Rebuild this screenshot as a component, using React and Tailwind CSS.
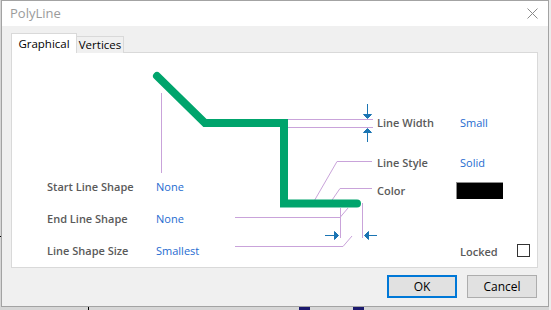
import React from 'react';

const font = { fontFamily: '"Open Sans", "Noto Sans", sans-serif' };

function Diagram() {
  // drawn in page coordinates; panel inner box starts at (12, 53)
  return (
    <svg className="absolute inset-0" width="525" height="214" viewBox="12 53 525 214">
      <g stroke="#c9a3da" strokeWidth="1" fill="none">
        <path d="M161.5 93 V173" />
        <path d="M288 119.5 H373" />
        <path d="M288 127.5 H373" />
        <path d="M313 203 L337 161.5 H372" />
        <path d="M330 203 L340 188.5 H372" />
        <path d="M235 217.5 H340 L348 208" />
        <path d="M235 246.5 H343 L352 236" />
        <path d="M340.5 208 V238" />
        <path d="M362.5 203 V238" />
      </g>
      <polyline
        points="157,76 205,123 284,123 284,203.5 357,203.5"
        fill="none"
        stroke="#00a46c"
        strokeWidth="8"
        strokeLinecap="round"
        strokeLinejoin="miter"
      />
      <g stroke="#1b75b3" fill="#1b75b3" strokeWidth="1">
        <path d="M367.5 104 V115" />
        <path d="M363.5 114.5 H371.5 L367.5 118.5 Z" />
        <path d="M367.5 132 V142" />
        <path d="M363.5 132.5 H371.5 L367.5 128.5 Z" />
        <path d="M325 235.5 H335" />
        <path d="M334.5 231.5 V239.5 L338.5 235.5 Z" />
        <path d="M368 235.5 H377" />
        <path d="M368.5 231.5 V239.5 L364.5 235.5 Z" />
      </g>
    </svg>
  );
}

function Label({ children }) {
  return <span className="text-[11px] font-semibold text-[#5a5a5a] leading-none">{children}</span>;
}

function Value({ children }) {
  return <span className="text-[11px] text-[#1e6bd0] leading-none">{children}</span>;
}

export default function App() {
  return (
    <div className="relative w-[551px] h-[310px] bg-[#d6d6d6] overflow-hidden" style={font}>
      {/* desktop bits peeking out behind the dialog */}
      <div className="absolute left-[88px] top-[307px] w-px h-[3px] bg-black" />
      <div className="absolute left-[299px] top-[307px] w-[11px] h-[3px] bg-[#1c1a6e]" />
      <div className="absolute left-[353px] top-[307px] w-[11px] h-[3px] bg-[#1c1a6e]" />
      <div className="absolute left-0 top-[236px] w-[3px] h-px bg-black" />
      <div className="absolute left-[549px] top-0 w-[2px] h-[310px] bg-[#ececec]" />

      <div className="relative ml-px w-[548px] h-[307px] border border-[#a3a3a3] bg-[#f0f0f0] flex flex-col">
        {/* title bar */}
        <div className="h-[25px] bg-white flex items-center justify-between pl-[8px] pr-[10px]">
          <span className="text-[13px] text-[#9b9b9b]">PolyLine</span>
          <svg width="11" height="11" viewBox="0 0 11 11">
            <path d="M0.5 0.5 L10.5 10.5 M10.5 0.5 L0.5 10.5" stroke="#8a8a8a" strokeWidth="1" />
          </svg>
        </div>

        <div className="flex-1 flex flex-col pl-[9px] pr-[8px]">
          {/* tabs */}
          <div className="flex items-end mt-[7px] relative z-10 -mb-px">
            <div className="w-[66px] h-[20px] bg-white border border-b-0 border-[#d9d9d9] flex items-center justify-center">
              <span className="text-[11.5px] text-black">Graphical</span>
            </div>
            <div className="w-[47px] h-[17px] bg-[#f0f0f0] border border-l-0 border-b-0 border-[#d9d9d9] flex items-center justify-center">
              <span className="text-[11.5px] text-black">Vertices</span>
            </div>
          </div>

          {/* panel */}
          <div className="relative w-[527px] h-[216px] bg-white border border-[#d9d9d9] flex">
            <Diagram />
            <div className="relative w-[365px] pl-[35px] pt-[117px]">
              <div className="grid grid-cols-[109px_auto] auto-rows-[32px] items-center">
                <Label>Start Line Shape</Label>
                <Value>None</Value>
                <Label>End Line Shape</Label>
                <Value>None</Value>
                <Label>Line Shape Size</Label>
                <Value>Smallest</Value>
              </div>
            </div>
            <div className="relative flex flex-col pt-[59px]">
              <div className="h-[20px] grid grid-cols-[83px_auto] items-center">
                <Label>Line Width</Label>
                <Value>Small</Value>
              </div>
              <div className="h-[20px] mt-[20px] grid grid-cols-[83px_auto] items-center">
                <Label>Line Style</Label>
                <Value>Solid</Value>
              </div>
              <div className="h-[20px] mt-[8px] grid grid-cols-[83px_auto] items-center">
                <Label>Color</Label>
                <div className="ml-[-4px] w-[47px] h-[17px] bg-black border-t border-l border-[#8c8c8c]" />
              </div>
              <div className="h-[20px] mt-[40px] flex items-center pl-[83px]">
                <div className="w-[57px]">
                  <Label>Locked</Label>
                </div>
                <div className="w-[13px] h-[13px] border border-[#333333] bg-white" />
              </div>
            </div>
          </div>

          {/* buttons */}
          <div className="flex justify-end gap-[10px] mt-[7px] pr-[3px]">
            <button className="w-[70px] h-[23px] bg-[#e1e1e1] border-2 border-[#0078d7] text-[12px] text-black">
              OK
            </button>
            <button className="w-[70px] h-[23px] bg-[#e1e1e1] border border-[#adadad] text-[12px] text-black">
              Cancel
            </button>
          </div>
        </div>
      </div>
    </div>
  );
}
